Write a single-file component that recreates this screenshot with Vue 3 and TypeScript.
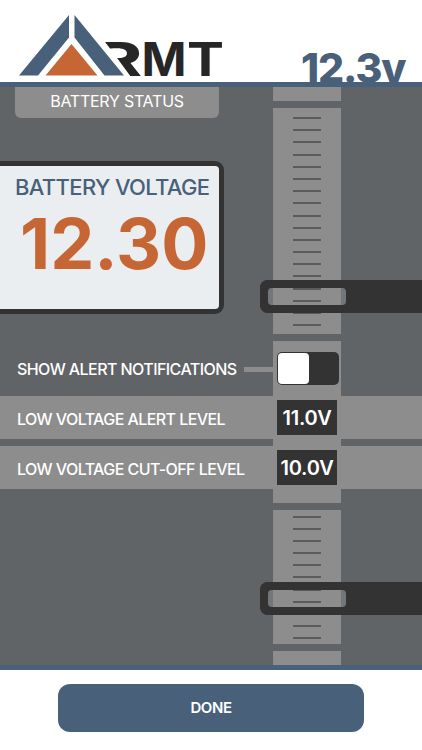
<script setup lang="ts">
import { ref, computed } from 'vue'

interface Level {
  label: string
  volts: number
}

const voltage = ref(12.3)
const alertsOn = ref(false)
const levels = ref<Level[]>([
  { label: 'LOW VOLTAGE ALERT LEVEL', volts: 11 },
  { label: 'LOW VOLTAGE CUT-OFF LEVEL', volts: 10 },
])
const short = computed(() => `${voltage.value.toFixed(1)}v`)
const long = computed(() => voltage.value.toFixed(2))
</script>

<template>
  <div class="screen">
    <header class="top">
      <svg class="logo" width="210" height="69" viewBox="17 13 210 69" role="img" aria-label="ARMT">
        <text class="mark heavy" x="97" y="75.5" textLength="45" lengthAdjust="spacingAndGlyphs">R</text>
        <text class="mark" x="141.5" y="75.5" textLength="45" lengthAdjust="spacingAndGlyphs">M</text>
        <text class="mark" x="187" y="75.5" textLength="37" lengthAdjust="spacingAndGlyphs">T</text>
        <path d="M95 40 H103.5 L110 48.5 H120 V54.5 H114.5 L131 77 H95 Z" fill="#fff" />
        <path class="steel" d="M69 15 V37.5 L38 75.5 H19 Z" />
        <path class="steel" d="M74.5 15 V37.5 L104.5 75.5 H124 Z" />
        <path class="ember" d="M71.5 44 L97.5 75.5 H45.5 Z" />
      </svg>
      <span class="short">{{ short }}</span>
    </header>

    <main class="board">
      <div class="layer gauge">
        <div class="seg cap"></div>
        <div class="seg upper"><i v-for="n in 18" :key="n" class="tick"></i></div>
        <div class="seg middle"></div>
        <div class="seg lower"><i v-for="n in 11" :key="n" class="tick"></i></div>
        <div class="seg cap"></div>
      </div>

      <div class="layer content">
        <h1 class="tab">BATTERY STATUS</h1>
        <section class="panel">
          <div class="caption">BATTERY VOLTAGE</div>
          <div class="long">{{ long }}</div>
        </section>
        <div class="row alerts">
          <span class="label show">SHOW ALERT NOTIFICATIONS</span>
          <span class="link"></span>
          <button class="toggle" :class="{ on: alertsOn }" aria-label="Alerts" @click="alertsOn = !alertsOn">
            <span class="knob"></span>
          </button>
        </div>
        <div v-for="l in levels" :key="l.label" class="row level">
          <span class="label">{{ l.label }}</span>
          <span class="value">{{ l.volts.toFixed(1) }}V</span>
        </div>
      </div>

      <div class="layer handles">
        <div class="handle"><span class="window"></span></div>
        <div class="handle"><span class="window"></span></div>
      </div>
    </main>

    <footer class="bottom">
      <button class="done">DONE</button>
    </footer>
  </div>
</template>

<style>
body {
  margin: 0;
}
</style>

<style scoped>
.screen {
  display: flex;
  flex-direction: column;
  width: 422px;
  height: 750px;
  overflow: hidden;
  background: #fff;
  font-family: Inter, 'Liberation Sans', sans-serif;
  box-sizing: border-box;
}
.screen * {
  box-sizing: border-box;
}
.top {
  flex: none;
  display: flex;
  justify-content: space-between;
  height: 87px;
  padding: 13px 16.5px 0 17px;
  border-bottom: 5px solid #48607a;
  overflow: hidden;
}
.logo {
  flex: none;
}
.mark {
  font-size: 46px;
  font-weight: 700;
  fill: #262626;
}
.heavy {
  font-weight: 800;
}
.steel {
  fill: #48607a;
}
.ember {
  fill: #c56634;
}
.short {
  padding-top: 35px;
  font-size: 41px;
  line-height: 40px;
  font-weight: 800;
  letter-spacing: -1.1px;
  color: #48607a;
  white-space: nowrap;
}
.board {
  flex: none;
  display: grid;
  height: 583px;
  background: #616467;
  border-bottom: 5px solid #48607a;
}
.layer {
  grid-area: 1 / 1;
  display: flex;
  flex-direction: column;
}
.gauge {
  width: 68px;
  margin-left: 273px;
  gap: 7px;
}
.seg {
  display: flex;
  flex-direction: column;
  align-items: center;
  gap: 10.2px;
  background: #8d8d8d;
}
.cap {
  height: 14px;
}
.upper {
  height: 226px;
  padding-top: 9px;
}
.middle {
  height: 162px;
}
.lower {
  height: 134px;
  padding-top: 5.5px;
}
.tick {
  flex: none;
  width: 28px;
  height: 2px;
  background: #5b5b5b;
}
.tab {
  width: 204px;
  height: 31px;
  margin: 0 0 43px 15px;
  border-radius: 0 0 6px 6px;
  background: #8d8d8d;
  color: #fff;
  font-size: 16px;
  font-weight: 400;
  letter-spacing: -0.25px;
  line-height: 29px;
  text-align: center;
}
.panel {
  width: 224px;
  height: 153px;
  margin-bottom: 27px;
  border: 5px solid #333;
  border-left: 0;
  border-radius: 0 9px 9px 0;
  background: #ebeef1;
  white-space: nowrap;
}
.caption {
  padding: 9px 0 0 15px;
  color: #48607a;
  font-size: 22px;
  font-weight: 500;
  letter-spacing: -0.64px;
  line-height: 24px;
}
.long {
  padding-left: 20px;
  color: #c56634;
  font-size: 70px;
  font-weight: 700;
  line-height: 90px;
}
.row {
  display: flex;
  align-items: center;
  padding-left: 17px;
  color: #fff;
}
.alerts {
  height: 55px;
}
.level {
  height: 43px;
  background: #8d8d8d;
}
.level + .level {
  margin-top: 7px;
}
.label {
  width: 260px;
  padding-top: 1px;
  font-size: 16px;
  font-weight: 500;
  letter-spacing: -0.57px;
  white-space: nowrap;
}
.level .label {
  padding-top: 3px;
}
.show {
  width: 226.5px;
}
.link {
  width: 29.5px;
  height: 5px;
  margin-top: 1px;
  background: #8d8d8d;
}
.toggle {
  display: flex;
  width: 61.5px;
  height: 33px;
  margin-left: 4px;
  padding: 1px;
  border: 0;
  border-radius: 5px;
  background: #333;
}
.toggle.on {
  justify-content: flex-end;
}
.knob {
  width: 31px;
  height: 31px;
  border-radius: 4px;
  background: #fff;
}
.value {
  width: 60px;
  height: 35px;
  background: #333;
  font-size: 20px;
  font-weight: 600;
  letter-spacing: -0.2px;
  line-height: 37px;
  text-align: center;
}
.handles {
  padding: 193px 0 0 260px;
  gap: 268.5px;
}
.handle {
  height: 33px;
  border: solid #333;
  border-width: 8px 0 8px 8px;
  border-radius: 8px 0 0 8px;
  display: flex;
}
.window {
  flex: none;
  width: 78px;
  border-radius: 4px;
  background: linear-gradient(90deg, rgba(141, 146, 152, 0.4) 5px, transparent 5px 73px, rgba(141, 146, 152, 0.4) 73px);
  box-shadow: 0 0 0 3px #333;
}
.handle::after {
  content: '';
  flex: 1;
  background: #333;
}
.bottom {
  display: flex;
  justify-content: center;
  padding: 13.5px 0 0;
}
.done {
  width: 305.5px;
  height: 48.5px;
  border: 0;
  border-radius: 12px;
  background: #48607a;
  color: #fff;
  font: 600 15px Inter, sans-serif;
  letter-spacing: -0.4px;
}
</style>
